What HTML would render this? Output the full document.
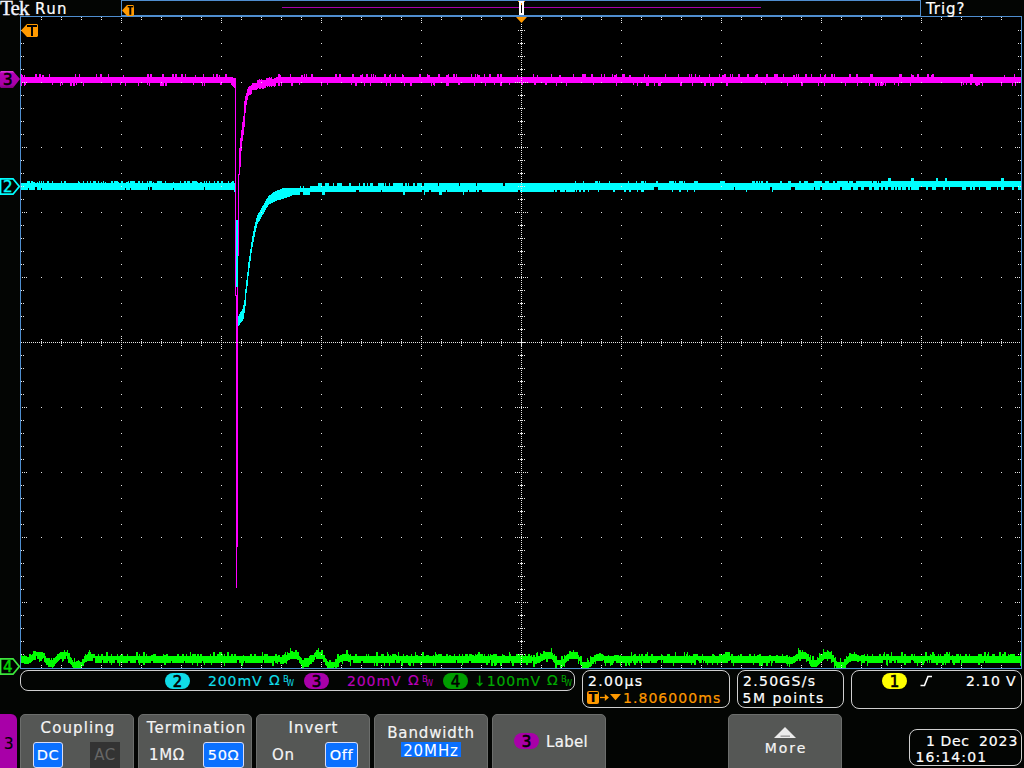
<!DOCTYPE html>
<html><head><meta charset="utf-8"><title>Tek scope</title>
<style>
html,body{margin:0;padding:0}
body{width:1024px;height:768px;overflow:hidden;position:relative;background:#030503;
 font-family:"DejaVu Sans","Liberation Sans",sans-serif;font-size:14px;color:#fff}
.t{position:absolute;white-space:nowrap;line-height:16px;height:16px;letter-spacing:.9px}
.t,.lbl,.sel,.opt{-webkit-text-stroke:.2px currentColor}
.box{position:absolute;border:1px solid #cfcfcf;border-radius:8px;box-sizing:border-box}
.pill{position:absolute;width:25px;height:16px;border-radius:8px;color:#000;text-align:center;
 line-height:18px;font-size:15px}
.pill{-webkit-text-stroke:.6px currentColor}
.btn{position:absolute;top:714px;height:60px;width:114px;box-sizing:border-box;background:#555755;
 border:1px solid #6c6e6c;border-radius:5px 5px 0 0}
.lbl{position:absolute;left:0;right:0;text-align:center;font-size:15px;line-height:18px;letter-spacing:.9px;color:#f4f4f4}
.sel{position:absolute;top:742px;height:26px;box-sizing:border-box;background:#0a70ff;border:1px solid #d8dcf8;
 border-radius:3px;color:#fff;font-size:14.5px;line-height:24.5px;text-align:center;letter-spacing:.6px}
.opt{position:absolute;font-size:15px;line-height:18px;letter-spacing:.6px;color:#f4f4f4}
.bw{position:absolute;font-size:9.5px;line-height:10px;letter-spacing:0;font-stretch:condensed;-webkit-text-stroke:0}
</style></head><body>
<svg width="1024" height="768" viewBox="0 0 1024 768" shape-rendering="crispEdges" style="position:absolute;left:0;top:0">
<defs><linearGradient id="mg" x1="0" y1="0" x2="0" y2="1"><stop offset="0" stop-color="#e23fe2"/><stop offset="0.15" stop-color="#b400b4"/><stop offset="0.8" stop-color="#a800a8"/><stop offset="1" stop-color="#7a007a"/></linearGradient></defs>
<rect x="20" y="16" width="1002" height="653" fill="#000"/>
<g transform="translate(0.5,0)" fill="none" stroke-width="1">
<path stroke="#00ff00" d="M21 654v9M22 656v7M23 656v7M24 655v9M25 656v8M26 656v8M27 657v7M28 657v7M29 654v9M30 654v9M31 655v7M32 654v7M33 651v9M34 651v9M35 651v9M36 652v4M37 652v7M38 652v7M39 652v10M40 652v9M41 652v9M42 652v7M43 653v5M44 653v9M45 656v7M46 658v7M47 658v7M48 658v9M49 658v9M50 660v7M51 658v9M52 660v8M53 658v9M54 658v8M55 657v7M56 656v7M57 654v8M58 654v7M59 653v7M60 652v7M61 652v7M62 652v10M63 652v9M64 650v9M65 652v7M66 652v4M67 650v9M68 653v10M69 653v10M70 657v7M71 658v7M72 660v7M73 662v6M74 658v10M75 662v6M76 661v7M77 661v7M78 660v8M79 661v7M80 662v6M81 662v6M82 659v7M83 659v7M84 656v7M85 654v8M86 655v7M87 654v7M88 652v9M89 650v11M90 652v9M91 654v7M92 654v7M93 654v4M94 654v4M95 656v7M96 656v7M97 656v7M98 654v9M99 656v7M100 656v7M101 654v9M102 654v6M103 656v7M104 656v7M105 656v7M106 652v11M107 652v11M108 656v5M109 656v7M110 656v7M111 654v11M112 656v7M113 656v7M114 656v7M115 656v4M116 656v4M117 654v9M118 656v7M119 656v10M120 655v8M121 654v9M122 654v9M123 656v7M124 656v7M125 656v7M126 656v7M127 654v9M128 656v5M129 656v5M130 656v7M131 656v7M132 656v7M133 656v7M134 656v7M135 656v7M136 652v8M137 652v8M138 656v7M139 654v11M140 656v7M141 656v7M142 656v7M143 652v13M144 652v13M145 656v7M146 654v9M147 656v7M148 656v7M149 656v7M150 656v7M151 655v6M152 655v6M153 654v9M154 654v9M155 654v9M156 656v7M157 656v7M158 656v7M159 656v7M160 656v7M161 656v7M162 656v7M163 654v9M164 655v10M165 655v10M166 654v9M167 654v9M168 656v7M169 656v7M170 656v7M171 656v5M172 656v7M173 656v7M174 656v7M175 656v7M176 656v7M177 654v9M178 654v9M179 656v7M180 656v7M181 656v7M182 654v9M183 654v9M184 656v5M185 656v7M186 654v9M187 656v7M188 656v7M189 656v7M190 652v11M191 656v7M192 654v11M193 654v9M194 654v9M195 654v9M196 656v7M197 654v12M198 654v9M199 656v7M200 654v9M201 654v9M202 656v5M203 656v7M204 656v9M205 656v7M206 656v7M207 656v7M208 656v7M209 656v7M210 654v9M211 656v9M212 656v7M213 652v11M214 652v11M215 656v7M216 656v7M217 654v9M218 654v9M219 652v11M220 652v11M221 652v11M222 654v9M223 656v7M224 654v12M225 656v7M226 656v7M227 652v11M228 652v11M229 656v7M230 656v7M231 654v9M232 654v9M233 656v7M234 654v9M235 654v9M236 656v7M237 656v4M238 656v4M239 656v7M240 656v7M241 656v10M242 656v10M243 655v8M244 656v5M245 656v7M246 656v7M247 656v7M248 656v7M249 656v7M250 654v9M251 654v9M252 656v7M253 656v7M254 654v9M255 654v9M256 656v7M257 656v7M258 656v7M259 656v7M260 656v7M261 656v7M262 652v11M263 656v4M264 654v9M265 654v9M266 654v9M267 654v9M268 656v7M269 656v7M270 656v7M271 656v7M272 656v10M273 656v10M274 656v5M275 654v9M276 654v9M277 656v8M278 655v7M279 655v7M280 657v7M281 657v7M282 655v9M283 655v9M284 654v9M285 652v11M286 655v9M287 652v9M288 653v7M289 653v7M290 648v11M291 651v8M292 651v8M293 652v7M294 652v7M295 650v9M296 650v9M297 652v8M298 652v8M299 656v7M300 657v7M301 658v8M302 660v8M303 660v8M304 658v9M305 658v9M306 658v9M307 658v9M308 658v9M309 656v9M310 655v9M311 655v9M312 655v7M313 655v7M314 653v7M315 652v5M316 650v9M317 650v9M318 648v11M319 652v7M320 652v7M321 650v9M322 650v9M323 655v7M324 655v7M325 658v7M326 659v7M327 661v7M328 662v6M329 660v8M330 660v8M331 662v6M332 662v6M333 662v6M334 662v5M335 659v9M336 659v9M337 654v13M338 654v13M339 656v7M340 655v7M341 655v7M342 654v10M343 654v7M344 654v7M345 654v7M346 650v11M347 650v11M348 654v8M349 655v7M350 654v12M351 656v4M352 656v4M353 656v7M354 656v7M355 654v9M356 654v9M357 656v7M358 656v7M359 656v7M360 656v7M361 656v5M362 656v5M363 656v7M364 656v7M365 656v7M366 654v9M367 656v7M368 654v9M369 656v7M370 656v7M371 656v7M372 656v7M373 656v7M374 656v10M375 656v7M376 652v14M377 652v14M378 656v7M379 656v7M380 656v7M381 654v9M382 654v9M383 654v9M384 656v10M385 656v7M386 656v7M387 652v11M388 654v9M389 656v10M390 655v8M391 656v7M392 654v9M393 654v9M394 654v9M395 654v6M396 655v8M397 656v7M398 652v11M399 656v7M400 656v5M401 656v10M402 656v10M403 654v9M404 656v7M405 656v7M406 655v8M407 655v8M408 656v9M409 656v10M410 656v10M411 654v9M412 656v7M413 656v10M414 656v7M415 652v11M416 655v8M417 655v8M418 656v7M419 656v7M420 656v9M421 656v9M422 652v11M423 652v11M424 656v7M425 656v7M426 655v8M427 655v8M428 655v8M429 656v7M430 656v7M431 656v7M432 656v7M433 655v11M434 656v7M435 652v14M436 654v9M437 655v8M438 654v9M439 654v9M440 654v9M441 654v9M442 656v7M443 656v7M444 656v7M445 656v7M446 654v9M447 654v9M448 656v7M449 655v8M450 655v8M451 656v7M452 656v7M453 656v7M454 654v9M455 656v7M456 656v4M457 656v7M458 656v7M459 654v9M460 656v7M461 656v7M462 654v11M463 656v7M464 656v7M465 654v9M466 654v9M467 654v9M468 656v7M469 654v7M470 654v7M471 654v9M472 655v8M473 655v8M474 656v7M475 654v9M476 655v8M477 654v9M478 652v11M479 652v11M480 654v9M481 654v9M482 654v9M483 656v7M484 654v9M485 656v7M486 656v9M487 656v9M488 654v9M489 656v7M490 654v6M491 655v11M492 655v11M493 654v9M494 654v12M495 654v12M496 654v11M497 656v7M498 656v7M499 656v7M500 656v10M501 656v10M502 654v9M503 655v8M504 655v8M505 656v7M506 656v7M507 656v7M508 656v7M509 652v11M510 654v7M511 656v7M512 656v10M513 656v10M514 656v7M515 656v7M516 654v9M517 654v9M518 654v9M519 654v9M520 656v9M521 655v8M522 654v9M523 656v7M524 656v7M525 654v9M526 656v9M527 656v9M528 654v9M529 654v9M530 656v7M531 655v8M532 657v4M533 655v12M534 655v12M535 657v7M536 653v11M537 652v11M538 656v7M539 656v7M540 653v9M541 654v7M542 654v7M543 651v9M544 651v9M545 652v7M546 652v10M547 652v10M548 652v7M549 652v7M550 652v7M551 648v11M552 653v7M553 655v7M554 654v9M555 656v12M556 656v12M557 660v5M558 660v5M559 660v5M560 660v8M561 656v11M562 656v11M563 659v7M564 655v12M565 656v7M566 655v7M567 654v7M568 654v7M569 651v8M570 651v8M571 652v7M572 652v7M573 650v9M574 652v7M575 652v7M576 652v7M577 652v7M578 655v9M579 657v4M580 656v9M581 656v9M582 662v6M583 662v6M584 662v6M585 662v6M586 662v6M587 658v10M588 660v8M589 662v5M590 656v11M591 657v9M592 657v7M593 657v7M594 655v7M595 655v9M596 654v7M597 654v7M598 654v7M599 653v8M600 653v8M601 654v7M602 654v7M603 655v5M604 656v7M605 656v10M606 656v7M607 656v7M608 655v8M609 656v7M610 656v10M611 656v9M612 656v9M613 656v7M614 655v6M615 655v6M616 655v8M617 655v8M618 655v8M619 656v7M620 655v11M621 656v7M622 656v7M623 656v7M624 656v7M625 656v10M626 656v10M627 656v7M628 656v9M629 656v10M630 656v7M631 652v11M632 656v5M633 655v8M634 654v11M635 654v11M636 656v7M637 656v7M638 656v5M639 654v9M640 656v7M641 654v12M642 654v7M643 656v7M644 656v7M645 654v9M646 654v9M647 652v11M648 656v7M649 656v7M650 656v5M651 654v9M652 654v9M653 656v7M654 656v7M655 656v7M656 656v7M657 656v5M658 656v4M659 656v4M660 656v4M661 654v9M662 655v5M663 656v7M664 656v7M665 656v7M666 656v7M667 654v9M668 654v9M669 654v9M670 656v7M671 656v7M672 656v7M673 656v10M674 656v7M675 652v11M676 656v7M677 656v7M678 656v7M679 656v7M680 656v7M681 656v7M682 656v7M683 656v7M684 652v11M685 656v7M686 654v9M687 652v11M688 656v7M689 655v8M690 656v7M691 656v9M692 656v7M693 654v9M694 654v11M695 654v11M696 654v6M697 654v6M698 656v5M699 656v7M700 656v7M701 656v7M702 654v6M703 656v7M704 656v5M705 656v7M706 656v7M707 656v9M708 656v7M709 656v7M710 656v7M711 656v7M712 654v11M713 654v9M714 655v8M715 656v7M716 656v7M717 656v9M718 656v7M719 654v9M720 654v9M721 654v9M722 655v8M723 654v9M724 654v9M725 652v11M726 652v11M727 652v11M728 652v9M729 652v9M730 656v4M731 654v9M732 654v9M733 656v10M734 656v7M735 656v7M736 656v7M737 656v7M738 655v8M739 656v7M740 654v9M741 654v9M742 656v7M743 656v7M744 656v7M745 656v7M746 656v7M747 656v7M748 656v7M749 654v9M750 654v9M751 656v7M752 656v7M753 656v9M754 654v9M755 656v7M756 656v7M757 655v8M758 655v8M759 654v12M760 654v12M761 656v10M762 656v10M763 656v7M764 656v7M765 656v7M766 656v10M767 656v10M768 656v7M769 655v8M770 655v6M771 656v10M772 656v7M773 656v5M774 656v5M775 656v7M776 655v8M777 655v8M778 656v7M779 656v7M780 656v7M781 656v7M782 654v9M783 656v7M784 656v7M785 656v7M786 655v9M787 655v11M788 657v7M789 656v11M790 657v7M791 657v7M792 657v7M793 656v7M794 656v7M795 655v7M796 654v7M797 654v7M798 648v11M799 650v11M800 650v11M801 652v7M802 650v9M803 652v7M804 652v7M805 652v7M806 653v9M807 654v7M808 654v7M809 657v7M810 655v11M811 660v7M812 656v11M813 656v11M814 660v7M815 660v7M816 660v7M817 657v9M818 658v7M819 653v11M820 654v9M821 654v9M822 654v7M823 649v11M824 652v7M825 652v7M826 652v7M827 650v11M828 651v8M829 652v7M830 652v7M831 651v12M832 655v7M833 655v7M834 658v10M835 657v9M836 661v7M837 662v6M838 662v6M839 662v6M840 658v10M841 662v6M842 662v6M843 662v6M844 659v9M845 659v9M846 656v9M847 657v7M848 656v7M849 653v9M850 653v9M851 654v7M852 654v7M853 654v7M854 652v9M855 654v7M856 654v7M857 655v7M858 655v7M859 656v5M860 656v5M861 655v10M862 655v8M863 655v8M864 654v9M865 656v5M866 656v5M867 654v12M868 656v7M869 656v7M870 656v7M871 656v7M872 654v9M873 656v7M874 656v7M875 656v7M876 656v7M877 656v7M878 656v7M879 654v9M880 654v9M881 656v7M882 656v7M883 654v6M884 652v8M885 656v4M886 654v11M887 654v12M888 654v6M889 656v7M890 656v7M891 652v11M892 656v5M893 656v5M894 656v7M895 656v7M896 656v4M897 656v7M898 656v7M899 656v7M900 656v7M901 652v11M902 652v11M903 656v7M904 654v11M905 654v11M906 656v7M907 656v7M908 656v7M909 656v7M910 656v7M911 654v6M912 654v6M913 656v5M914 654v9M915 656v7M916 656v7M917 656v10M918 656v7M919 656v7M920 656v7M921 656v7M922 656v9M923 656v9M924 656v7M925 652v9M926 652v9M927 656v7M928 656v4M929 656v7M930 654v6M931 655v8M932 652v11M933 652v11M934 654v9M935 656v7M936 656v9M937 656v9M938 654v9M939 656v7M940 654v9M941 656v7M942 656v9M943 656v9M944 654v9M945 654v11M946 652v11M947 652v11M948 654v9M949 652v11M950 656v4M951 656v4M952 655v8M953 656v9M954 656v9M955 656v7M956 654v9M957 654v9M958 654v9M959 656v7M960 654v6M961 656v10M962 656v7M963 656v7M964 656v7M965 654v9M966 654v9M967 656v7M968 656v7M969 654v9M970 656v7M971 656v7M972 656v7M973 656v7M974 656v7M975 656v7M976 656v7M977 656v7M978 654v11M979 654v11M980 654v9M981 654v9M982 656v7M983 656v7M984 652v9M985 652v11M986 656v7M987 654v9M988 652v11M989 656v7M990 656v7M991 656v7M992 654v9M993 654v9M994 654v9M995 656v7M996 656v7M997 656v7M998 656v7M999 652v11M1000 652v11M1001 656v7M1002 654v9M1003 654v9M1004 652v11M1005 652v11M1006 656v7M1007 656v7M1008 654v9M1009 655v8M1010 654v9M1011 654v9M1012 654v9M1013 654v9M1014 654v9M1015 656v7M1016 656v7M1017 656v7M1018 656v7M1019 656v7M1020 652v14"/>
<path stroke="#00ffff" d="M21 183v7M22 183v7M23 183v7M24 183v7M25 183v7M26 183v7M27 181v9M28 181v7M29 181v9M30 183v7M31 181v9M32 181v9M33 182v8M34 182v8M35 183v4M36 183v4M37 182v8M38 183v7M39 181v9M40 183v7M41 181v7M42 183v7M43 181v9M44 183v7M45 183v7M46 183v7M47 181v9M48 181v9M49 183v7M50 183v7M51 183v7M52 181v9M53 183v7M54 183v7M55 183v7M56 183v7M57 183v7M58 183v7M59 183v7M60 183v7M61 181v9M62 183v7M63 183v7M64 181v9M65 181v9M66 183v7M67 183v7M68 183v7M69 183v7M70 183v7M71 183v7M72 183v7M73 183v7M74 183v7M75 183v7M76 183v7M77 183v7M78 181v9M79 182v8M80 183v7M81 183v7M82 183v7M83 181v9M84 183v7M85 183v7M86 183v7M87 181v9M88 183v7M89 183v7M90 181v9M91 183v7M92 183v7M93 181v9M94 181v9M95 181v9M96 183v7M97 183v7M98 181v9M99 183v7M100 183v7M101 182v8M102 183v7M103 181v9M104 183v7M105 182v8M106 183v7M107 183v7M108 183v7M109 183v7M110 183v7M111 181v9M112 181v9M113 183v7M114 181v9M115 181v9M116 181v9M117 181v9M118 182v8M119 183v7M120 183v7M121 181v9M122 181v9M123 183v7M124 183v7M125 183v5M126 182v8M127 182v8M128 181v9M129 183v7M130 181v7M131 181v9M132 181v9M133 181v9M134 181v9M135 183v7M136 183v7M137 183v7M138 181v9M139 181v9M140 183v7M141 183v7M142 181v9M143 183v7M144 183v7M145 183v7M146 183v7M147 181v9M148 183v4M149 181v9M150 181v6M151 181v6M152 183v7M153 182v8M154 183v7M155 183v7M156 183v7M157 181v9M158 181v9M159 181v9M160 181v9M161 181v9M162 183v7M163 183v7M164 183v7M165 181v9M166 183v7M167 183v7M168 183v7M169 183v7M170 183v7M171 183v7M172 183v7M173 182v6M174 183v7M175 183v7M176 183v7M177 183v7M178 183v7M179 183v7M180 181v9M181 183v7M182 183v7M183 183v7M184 181v9M185 181v9M186 183v7M187 181v9M188 181v9M189 181v9M190 183v7M191 183v7M192 181v9M193 181v9M194 181v9M195 181v9M196 181v9M197 182v8M198 183v7M199 183v7M200 182v8M201 182v8M202 183v7M203 183v7M204 181v6M205 183v7M206 181v9M207 183v7M208 183v7M209 181v9M210 183v7M211 183v7M212 183v7M213 183v7M214 181v9M215 183v7M216 183v7M217 181v9M218 181v9M219 183v7M220 183v7M221 181v9M222 181v9M223 183v7M224 183v7M225 183v7M226 183v7M227 183v7M228 181v9M229 183v7M230 183v7M231 182v8M232 181v9M233 181v9M234 183v9M235 183v38M236 220v67M237 220v67M238 316v10M239 314v11M240 312v11M241 311v11M242 309v12M243 305v14M244 300v13M245 289v17M246 280v13M247 272v14M248 262v14M249 256v12M250 249v12M251 242v11M252 236v11M253 231v11M254 226v11M255 222v10M256 218v10M257 215v9M258 213v9M259 212v9M260 210v9M261 208v9M262 206v9M263 205v9M264 203v9M265 201v9M266 199v9M267 198v9M268 196v9M269 195v9M270 195v9M271 194v9M272 193v10M273 192v10M274 192v10M275 191v10M276 191v10M277 190v10M278 190v10M279 190v10M280 189v11M281 189v10M282 188v11M283 188v11M284 188v10M285 188v10M286 188v10M287 188v9M288 188v9M289 188v9M290 188v8M291 188v8M292 188v7M293 188v7M294 188v7M295 188v7M296 188v7M297 188v7M298 188v7M299 188v7M300 186v6M301 188v4M302 188v4M303 186v9M304 188v7M305 188v7M306 188v7M307 188v7M308 188v7M309 188v7M310 186v6M311 186v6M312 186v6M313 186v6M314 186v6M315 186v6M316 186v6M317 186v6M318 183v9M319 183v9M320 183v9M321 183v9M322 186v9M323 186v9M324 186v9M325 183v9M326 183v9M327 183v9M328 183v9M329 186v6M330 186v6M331 186v6M332 186v6M333 183v9M334 186v6M335 186v6M336 186v6M337 183v9M338 183v9M339 183v9M340 183v9M341 183v9M342 186v6M343 186v6M344 186v6M345 186v6M346 186v6M347 186v6M348 186v6M349 183v9M350 183v9M351 186v6M352 186v6M353 186v6M354 186v6M355 186v6M356 186v4M357 186v4M358 186v4M359 183v9M360 186v6M361 186v6M362 186v6M363 183v9M364 183v9M365 186v6M366 186v6M367 183v9M368 186v6M369 186v6M370 183v9M371 183v9M372 183v9M373 186v6M374 186v6M375 186v6M376 186v6M377 186v6M378 183v9M379 183v9M380 183v9M381 183v7M382 183v9M383 183v9M384 186v6M385 183v9M386 186v6M387 186v6M388 186v6M389 183v9M390 186v6M391 186v6M392 186v6M393 183v9M394 183v9M395 183v9M396 183v9M397 183v9M398 183v9M399 183v9M400 183v9M401 183v9M402 183v9M403 186v9M404 186v9M405 183v9M406 183v9M407 186v6M408 183v9M409 186v6M410 186v6M411 186v6M412 186v6M413 183v9M414 183v9M415 186v6M416 186v6M417 183v9M418 183v9M419 183v9M420 183v9M421 183v9M422 186v4M423 186v4M424 183v12M425 183v9M426 183v9M427 183v9M428 183v9M429 183v7M430 183v7M431 183v9M432 183v9M433 183v9M434 183v9M435 183v9M436 183v9M437 183v9M438 186v6M439 183v12M440 183v12M441 183v12M442 183v9M443 183v9M444 183v9M445 183v9M446 183v7M447 183v9M448 183v9M449 183v9M450 183v9M451 183v9M452 183v9M453 183v9M454 183v9M455 183v9M456 183v9M457 183v9M458 183v9M459 186v6M460 183v9M461 183v9M462 183v9M463 183v12M464 183v9M465 183v9M466 183v9M467 183v9M468 183v7M469 183v9M470 183v9M471 183v9M472 183v9M473 183v9M474 183v9M475 183v9M476 186v4M477 183v9M478 183v9M479 183v7M480 183v7M481 183v7M482 183v9M483 183v9M484 183v9M485 183v9M486 183v9M487 183v9M488 183v9M489 183v9M490 183v9M491 183v9M492 183v9M493 183v9M494 183v9M495 183v9M496 183v9M497 183v9M498 183v9M499 183v9M500 183v9M501 183v9M502 183v9M503 186v6M504 186v6M505 183v9M506 183v9M507 183v9M508 183v9M509 183v9M510 183v9M511 183v9M512 183v9M513 183v9M514 183v9M515 183v9M516 183v9M517 183v9M518 183v7M519 183v7M520 183v9M521 183v9M522 183v9M523 183v9M524 183v9M525 183v9M526 183v9M527 183v9M528 183v9M529 183v9M530 183v9M531 183v9M532 183v9M533 183v9M534 183v9M535 183v9M536 183v9M537 183v9M538 183v9M539 183v9M540 183v9M541 183v9M542 183v9M543 183v9M544 183v9M545 183v9M546 183v9M547 183v9M548 183v9M549 183v9M550 183v9M551 183v9M552 183v9M553 183v9M554 183v7M555 183v9M556 183v9M557 183v7M558 183v7M559 183v7M560 183v9M561 183v9M562 183v9M563 183v9M564 183v9M565 183v7M566 183v9M567 183v9M568 183v9M569 183v9M570 183v9M571 183v9M572 183v9M573 183v9M574 183v9M575 181v9M576 183v9M577 183v7M578 183v7M579 183v9M580 183v9M581 183v7M582 183v7M583 181v11M584 183v9M585 183v7M586 183v7M587 183v7M588 183v9M589 183v7M590 183v7M591 183v7M592 183v7M593 183v7M594 183v7M595 181v9M596 181v9M597 181v9M598 183v9M599 181v9M600 183v7M601 183v7M602 183v7M603 183v7M604 183v7M605 183v7M606 183v7M607 183v7M608 183v7M609 181v9M610 183v7M611 183v7M612 183v7M613 183v9M614 183v9M615 183v7M616 183v7M617 183v7M618 183v7M619 183v7M620 183v7M621 183v7M622 183v7M623 183v7M624 183v9M625 183v9M626 183v7M627 183v7M628 181v9M629 183v9M630 183v9M631 183v7M632 183v7M633 183v7M634 183v7M635 183v7M636 181v9M637 183v9M638 183v7M639 183v7M640 183v7M641 181v11M642 181v11M643 181v11M644 183v7M645 181v9M646 183v7M647 183v7M648 183v7M649 183v7M650 183v7M651 183v7M652 183v7M653 183v7M654 183v4M655 183v4M656 181v6M657 181v6M658 183v7M659 183v7M660 183v7M661 183v7M662 183v7M663 183v7M664 183v7M665 183v7M666 183v7M667 183v7M668 183v7M669 181v9M670 181v9M671 181v9M672 181v11M673 181v9M674 183v7M675 181v9M676 183v7M677 183v7M678 183v7M679 181v11M680 181v11M681 181v9M682 181v9M683 183v7M684 181v9M685 183v7M686 183v7M687 183v9M688 183v7M689 183v7M690 183v7M691 183v7M692 183v7M693 183v7M694 181v11M695 181v9M696 181v9M697 181v9M698 183v7M699 183v7M700 183v7M701 183v7M702 183v7M703 183v7M704 183v7M705 183v7M706 183v7M707 183v7M708 183v7M709 183v7M710 183v7M711 183v7M712 183v7M713 183v7M714 183v7M715 183v7M716 183v7M717 183v7M718 183v7M719 183v7M720 181v9M721 181v9M722 181v9M723 181v9M724 181v9M725 183v7M726 183v7M727 183v7M728 183v7M729 183v7M730 183v7M731 183v7M732 183v7M733 183v7M734 183v4M735 183v7M736 183v7M737 183v7M738 183v7M739 183v7M740 183v7M741 183v7M742 183v7M743 183v7M744 183v7M745 183v7M746 183v9M747 183v7M748 183v7M749 183v7M750 183v7M751 183v7M752 181v9M753 181v9M754 181v9M755 183v7M756 181v9M757 181v9M758 183v7M759 181v9M760 183v7M761 181v9M762 181v9M763 183v7M764 183v7M765 183v7M766 181v9M767 181v9M768 183v7M769 183v7M770 183v4M771 183v4M772 183v9M773 183v7M774 183v7M775 183v7M776 183v7M777 183v7M778 183v7M779 183v7M780 181v9M781 181v9M782 183v7M783 183v7M784 183v7M785 183v7M786 183v7M787 183v7M788 181v9M789 181v9M790 181v9M791 183v4M792 183v4M793 183v4M794 183v4M795 183v7M796 183v7M797 183v7M798 183v7M799 181v9M800 181v9M801 183v7M802 183v7M803 183v7M804 181v9M805 181v9M806 181v9M807 181v9M808 183v7M809 183v7M810 183v7M811 183v7M812 183v7M813 183v7M814 181v6M815 181v9M816 181v9M817 181v9M818 181v9M819 181v9M820 181v6M821 181v6M822 183v7M823 183v7M824 183v7M825 181v9M826 181v9M827 181v9M828 181v9M829 183v7M830 183v7M831 183v7M832 183v7M833 181v9M834 181v9M835 183v7M836 183v7M837 181v9M838 181v9M839 181v9M840 181v6M841 181v6M842 181v9M843 181v9M844 181v9M845 181v9M846 181v9M847 181v9M848 183v7M849 181v9M850 181v9M851 181v6M852 181v6M853 183v7M854 183v7M855 183v7M856 181v9M857 181v9M858 181v6M859 181v6M860 181v6M861 181v9M862 181v9M863 181v9M864 181v6M865 181v6M866 181v6M867 181v6M868 181v6M869 181v9M870 181v9M871 181v9M872 183v4M873 181v6M874 181v9M875 181v9M876 181v9M877 183v7M878 181v9M879 183v4M880 183v4M881 181v9M882 181v9M883 181v6M884 181v6M885 181v9M886 181v9M887 181v9M888 178v9M889 178v9M890 178v9M891 181v9M892 181v9M893 181v9M894 181v6M895 181v9M896 181v9M897 181v6M898 181v9M899 181v9M900 181v9M901 181v6M902 181v9M903 181v9M904 181v9M905 181v9M906 181v6M907 181v6M908 181v9M909 181v9M910 181v6M911 178v12M912 178v12M913 178v12M914 181v9M915 181v9M916 181v9M917 181v9M918 181v9M919 181v6M920 181v6M921 181v6M922 181v6M923 181v6M924 181v6M925 181v6M926 181v9M927 181v9M928 181v6M929 181v6M930 181v6M931 181v6M932 181v9M933 181v9M934 181v9M935 181v9M936 178v9M937 178v9M938 181v6M939 181v6M940 181v6M941 181v6M942 181v6M943 181v9M944 181v9M945 178v9M946 178v9M947 181v6M948 181v6M949 181v9M950 181v6M951 181v6M952 181v6M953 181v6M954 181v6M955 181v6M956 181v6M957 181v6M958 181v6M959 181v6M960 181v6M961 181v6M962 181v9M963 181v9M964 181v9M965 181v9M966 181v6M967 181v6M968 181v6M969 181v6M970 181v9M971 181v9M972 181v6M973 181v9M974 181v9M975 181v6M976 181v6M977 181v6M978 181v6M979 181v9M980 181v6M981 181v6M982 181v6M983 181v6M984 181v6M985 181v6M986 181v9M987 181v9M988 181v9M989 181v9M990 181v9M991 181v6M992 181v6M993 181v6M994 181v6M995 181v6M996 181v6M997 181v9M998 181v6M999 181v6M1000 181v6M1001 178v12M1002 178v12M1003 178v12M1004 181v6M1005 181v6M1006 181v6M1007 181v6M1008 181v6M1009 181v6M1010 181v6M1011 181v6M1012 181v9M1013 181v9M1014 181v6M1015 181v6M1016 181v6M1017 181v6M1018 181v9M1019 181v9M1020 181v9"/>
<path stroke="#ff00ff" d="M21 74v12M22 75v8M23 77v6M24 75v11M25 77v8M26 77v6M27 77v6M28 77v6M29 77v6M30 77v6M31 77v6M32 77v6M33 77v6M34 77v6M35 74v9M36 74v9M37 77v6M38 77v6M39 74v9M40 74v9M41 77v6M42 75v8M43 75v8M44 77v6M45 77v6M46 77v6M47 77v6M48 77v6M49 74v9M50 77v6M51 77v6M52 77v8M53 77v6M54 77v6M55 77v6M56 77v6M57 77v6M58 77v6M59 77v6M60 77v9M61 77v6M62 77v8M63 77v6M64 77v6M65 77v6M66 77v6M67 77v6M68 77v6M69 77v6M70 77v9M71 77v9M72 77v6M73 77v9M74 77v9M75 74v9M76 77v8M77 77v6M78 77v6M79 74v9M80 77v6M81 77v6M82 77v6M83 77v9M84 77v6M85 77v6M86 77v6M87 77v6M88 77v6M89 77v6M90 77v6M91 77v6M92 77v6M93 77v6M94 77v6M95 77v6M96 74v9M97 77v6M98 77v6M99 77v6M100 74v9M101 74v9M102 77v6M103 77v6M104 77v6M105 77v6M106 77v6M107 77v6M108 74v9M109 77v6M110 77v6M111 77v9M112 77v6M113 77v6M114 77v6M115 77v6M116 77v6M117 77v6M118 77v6M119 77v6M120 77v8M121 77v6M122 77v6M123 75v8M124 77v6M125 77v9M126 77v6M127 77v6M128 77v6M129 77v6M130 77v6M131 77v6M132 77v6M133 77v6M134 77v6M135 77v6M136 77v6M137 77v6M138 77v9M139 77v6M140 77v6M141 77v6M142 77v6M143 77v6M144 77v6M145 77v6M146 77v6M147 74v11M148 74v9M149 77v9M150 74v9M151 74v9M152 77v6M153 77v6M154 77v6M155 77v6M156 77v6M157 77v6M158 77v6M159 77v6M160 77v9M161 77v9M162 74v12M163 74v12M164 77v6M165 77v9M166 77v9M167 77v6M168 77v6M169 77v6M170 77v6M171 77v6M172 74v9M173 74v9M174 77v6M175 74v9M176 74v9M177 77v6M178 77v6M179 77v6M180 77v6M181 74v9M182 74v9M183 77v6M184 77v6M185 74v9M186 77v6M187 77v6M188 77v6M189 77v6M190 77v6M191 77v6M192 77v6M193 77v8M194 77v6M195 75v8M196 77v6M197 77v6M198 77v6M199 77v6M200 77v6M201 77v6M202 77v9M203 74v9M204 77v9M205 77v6M206 77v6M207 77v6M208 77v6M209 77v6M210 77v6M211 77v6M212 77v6M213 74v9M214 77v6M215 77v6M216 74v9M217 74v9M218 77v6M219 75v8M220 77v8M221 77v8M222 77v6M223 77v6M224 77v6M225 74v9M226 74v9M227 77v6M228 77v6M229 77v6M230 77v6M231 77v8M232 77v9M233 78v9M234 78v10M235 78v218M236 295v293M237 287v260M238 174v82M239 148v27M240 138v29M241 130v21M242 122v19M243 116v19M244 101v26M245 96v17M246 93v12M247 89v11M248 87v9M249 86v9M250 86v9M251 85v9M252 83v7M253 83v7M254 83v7M255 83v7M256 83v7M257 80v9M258 80v8M259 79v10M260 80v9M261 79v9M262 80v9M263 80v9M264 80v8M265 80v8M266 78v8M267 78v9M268 78v8M269 77v10M270 78v8M271 77v10M272 79v7M273 79v7M274 78v9M275 78v8M276 77v6M277 77v6M278 74v12M279 74v12M280 75v8M281 77v9M282 77v6M283 77v6M284 77v6M285 77v6M286 77v6M287 77v6M288 77v6M289 77v6M290 74v9M291 77v9M292 77v9M293 77v6M294 77v6M295 77v6M296 77v6M297 77v6M298 77v6M299 77v8M300 77v6M301 75v8M302 75v8M303 77v6M304 74v9M305 77v6M306 74v9M307 77v6M308 77v6M309 77v6M310 77v6M311 74v9M312 74v9M313 77v6M314 77v6M315 77v6M316 77v6M317 77v6M318 77v6M319 77v6M320 77v6M321 77v9M322 77v6M323 77v6M324 77v6M325 77v6M326 77v6M327 77v8M328 77v6M329 77v6M330 77v6M331 77v6M332 77v6M333 77v6M334 77v6M335 74v9M336 74v9M337 77v6M338 77v6M339 74v9M340 74v9M341 77v6M342 77v6M343 77v6M344 77v6M345 77v6M346 77v6M347 77v6M348 77v6M349 77v6M350 77v6M351 77v8M352 74v9M353 74v9M354 77v6M355 77v9M356 77v9M357 77v6M358 77v6M359 77v6M360 75v8M361 75v8M362 74v9M363 77v6M364 77v9M365 77v6M366 74v9M367 74v9M368 77v6M369 77v6M370 77v9M371 74v9M372 77v6M373 74v9M374 77v6M375 75v8M376 77v6M377 77v6M378 77v6M379 77v6M380 77v6M381 77v6M382 77v6M383 77v6M384 74v9M385 74v9M386 77v9M387 77v6M388 77v6M389 75v8M390 74v12M391 77v6M392 77v6M393 77v6M394 77v6M395 74v9M396 77v6M397 77v6M398 77v6M399 77v6M400 77v6M401 77v6M402 74v9M403 75v8M404 77v9M405 77v6M406 77v6M407 77v6M408 77v6M409 77v6M410 77v9M411 77v9M412 77v6M413 77v6M414 77v6M415 77v6M416 77v6M417 77v6M418 77v6M419 74v9M420 74v9M421 77v6M422 77v6M423 77v6M424 77v6M425 77v6M426 77v6M427 74v9M428 75v8M429 75v8M430 77v6M431 77v9M432 77v6M433 77v8M434 77v9M435 77v6M436 77v6M437 77v6M438 74v9M439 74v9M440 77v6M441 77v6M442 77v6M443 77v6M444 77v6M445 77v6M446 75v11M447 75v11M448 74v12M449 77v6M450 77v6M451 77v6M452 77v6M453 74v9M454 74v9M455 77v6M456 74v9M457 77v6M458 77v8M459 77v8M460 77v6M461 77v6M462 77v6M463 77v6M464 77v6M465 77v6M466 77v6M467 77v6M468 77v6M469 77v6M470 77v6M471 74v9M472 77v6M473 77v6M474 77v9M475 74v9M476 77v6M477 74v9M478 75v8M479 75v8M480 77v6M481 77v6M482 77v6M483 77v6M484 74v9M485 77v9M486 77v6M487 77v6M488 77v6M489 74v9M490 74v9M491 77v6M492 77v6M493 77v6M494 77v8M495 77v6M496 77v6M497 74v9M498 74v9M499 77v6M500 74v12M501 74v12M502 77v6M503 77v6M504 77v6M505 77v6M506 77v6M507 77v6M508 77v6M509 77v8M510 77v6M511 77v6M512 77v6M513 77v6M514 77v6M515 77v6M516 77v6M517 75v8M518 77v6M519 77v6M520 77v6M521 77v8M522 77v8M523 77v6M524 77v6M525 77v6M526 77v6M527 77v6M528 77v6M529 77v6M530 77v6M531 77v6M532 77v6M533 74v9M534 77v8M535 77v8M536 77v6M537 75v8M538 77v6M539 77v6M540 77v6M541 77v6M542 77v6M543 77v6M544 77v6M545 77v8M546 77v8M547 77v6M548 77v6M549 77v6M550 77v6M551 74v9M552 77v6M553 77v6M554 77v6M555 77v6M556 77v9M557 77v6M558 77v6M559 75v8M560 75v8M561 77v6M562 77v6M563 77v6M564 77v6M565 77v6M566 77v9M567 77v6M568 77v6M569 77v6M570 77v6M571 77v6M572 77v6M573 74v9M574 77v6M575 77v6M576 77v6M577 77v6M578 77v6M579 77v6M580 77v6M581 77v6M582 74v9M583 74v9M584 74v9M585 74v9M586 77v6M587 77v6M588 77v6M589 77v6M590 77v6M591 74v9M592 74v9M593 77v8M594 77v6M595 77v6M596 77v6M597 77v6M598 77v6M599 77v6M600 77v6M601 74v9M602 77v6M603 77v6M604 74v9M605 77v6M606 77v6M607 77v6M608 77v6M609 77v6M610 77v6M611 77v6M612 74v9M613 77v6M614 75v8M615 75v8M616 74v12M617 77v6M618 77v6M619 77v6M620 77v6M621 77v6M622 74v9M623 74v9M624 74v9M625 77v6M626 77v6M627 77v6M628 77v6M629 75v8M630 75v8M631 77v6M632 77v6M633 77v8M634 77v6M635 77v6M636 77v6M637 77v9M638 77v6M639 77v6M640 77v6M641 77v6M642 77v6M643 77v6M644 74v9M645 77v6M646 77v9M647 77v9M648 75v11M649 77v6M650 77v6M651 77v6M652 77v6M653 77v6M654 77v9M655 77v6M656 77v6M657 77v6M658 77v9M659 77v9M660 77v9M661 77v6M662 77v6M663 77v6M664 77v6M665 74v9M666 77v6M667 77v6M668 77v6M669 77v6M670 77v6M671 77v6M672 77v6M673 77v6M674 77v6M675 77v6M676 77v6M677 77v6M678 74v9M679 77v6M680 77v9M681 77v9M682 77v6M683 77v6M684 77v6M685 77v6M686 77v6M687 77v6M688 77v6M689 74v9M690 77v6M691 74v9M692 77v9M693 77v6M694 77v6M695 74v9M696 77v6M697 77v6M698 77v6M699 75v8M700 77v6M701 77v6M702 77v6M703 77v6M704 77v9M705 77v9M706 77v6M707 77v6M708 77v6M709 74v9M710 77v9M711 77v6M712 77v9M713 77v9M714 77v6M715 77v6M716 77v6M717 77v6M718 77v6M719 74v9M720 77v6M721 77v6M722 75v8M723 75v8M724 74v9M725 74v9M726 77v9M727 77v9M728 77v6M729 77v6M730 74v9M731 77v6M732 74v9M733 77v6M734 77v6M735 77v6M736 77v6M737 77v6M738 74v9M739 74v9M740 77v6M741 77v6M742 77v6M743 77v6M744 77v6M745 77v6M746 77v6M747 74v9M748 74v9M749 77v6M750 77v6M751 77v6M752 77v6M753 77v6M754 77v6M755 75v8M756 74v9M757 74v9M758 77v6M759 77v6M760 77v6M761 77v6M762 77v6M763 77v6M764 77v6M765 77v8M766 74v9M767 74v9M768 77v6M769 77v6M770 77v6M771 77v6M772 77v6M773 77v6M774 74v9M775 74v9M776 74v9M777 74v9M778 77v6M779 77v6M780 77v6M781 77v6M782 77v6M783 74v9M784 77v6M785 77v6M786 77v6M787 77v9M788 77v6M789 77v6M790 77v6M791 77v6M792 77v6M793 75v8M794 75v8M795 77v6M796 74v9M797 77v6M798 74v9M799 77v6M800 77v6M801 77v9M802 77v9M803 77v6M804 77v6M805 74v9M806 74v9M807 77v6M808 77v6M809 77v6M810 77v6M811 74v9M812 77v6M813 77v6M814 77v6M815 77v6M816 77v6M817 77v6M818 77v9M819 77v6M820 74v9M821 77v6M822 77v6M823 77v6M824 75v11M825 74v9M826 77v6M827 77v6M828 77v6M829 77v6M830 77v6M831 74v9M832 74v9M833 77v6M834 74v9M835 77v6M836 77v6M837 77v6M838 77v6M839 77v6M840 77v6M841 77v6M842 77v6M843 77v6M844 77v6M845 77v9M846 77v6M847 77v6M848 77v6M849 74v9M850 74v9M851 77v6M852 77v6M853 77v6M854 77v6M855 77v6M856 74v9M857 74v12M858 77v6M859 77v6M860 77v6M861 77v6M862 77v6M863 77v6M864 77v6M865 77v6M866 77v6M867 77v6M868 77v6M869 77v9M870 74v9M871 74v9M872 74v9M873 77v6M874 77v6M875 77v9M876 77v9M877 77v6M878 77v9M879 77v6M880 77v9M881 77v9M882 77v9M883 77v8M884 77v6M885 77v9M886 77v6M887 77v6M888 77v6M889 77v6M890 77v6M891 77v6M892 77v6M893 77v6M894 77v8M895 77v6M896 77v6M897 77v6M898 77v9M899 74v9M900 74v9M901 74v9M902 77v6M903 77v6M904 77v6M905 77v6M906 77v6M907 77v6M908 77v6M909 77v6M910 77v9M911 74v9M912 75v8M913 75v8M914 77v6M915 77v6M916 77v6M917 74v9M918 74v9M919 77v6M920 77v6M921 77v6M922 77v6M923 77v6M924 77v6M925 77v6M926 77v6M927 74v9M928 74v9M929 77v6M930 77v6M931 75v8M932 74v9M933 74v9M934 77v6M935 77v6M936 77v6M937 77v6M938 77v6M939 77v6M940 77v6M941 77v6M942 77v6M943 77v6M944 77v6M945 77v6M946 77v6M947 77v6M948 77v6M949 77v6M950 77v6M951 77v6M952 77v6M953 77v6M954 77v6M955 77v6M956 77v6M957 77v6M958 77v6M959 77v6M960 77v6M961 77v9M962 77v6M963 77v8M964 77v6M965 77v6M966 77v8M967 77v6M968 77v6M969 77v6M970 74v11M971 74v11M972 74v9M973 77v6M974 77v6M975 77v8M976 77v9M977 77v9M978 77v8M979 77v8M980 77v6M981 77v6M982 77v9M983 77v6M984 77v6M985 77v6M986 77v6M987 77v6M988 77v6M989 77v6M990 77v6M991 77v6M992 77v6M993 77v6M994 77v6M995 77v6M996 77v6M997 77v6M998 77v6M999 77v6M1000 77v6M1001 77v9M1002 77v6M1003 77v6M1004 75v8M1005 77v6M1006 77v6M1007 77v6M1008 77v6M1009 77v6M1010 77v6M1011 77v6M1012 77v9M1013 77v6M1014 74v9M1015 77v9M1016 77v6M1017 77v6M1018 77v6M1019 77v6M1020 77v6"/>
</g>
<g transform="translate(0,0.5)" fill="none" stroke-width="1">
<path stroke="#e6e6e6" d="M21 30h1M21 43h1M21 56h1M21 69h1M21 95h1M21 108h1M21 121h1M21 134h1M21 160h1M21 173h1M21 186h1M21 199h1M21 225h1M21 238h1M21 251h1M21 264h1M21 290h1M21 303h1M21 316h1M21 329h1M21 342h1M21 355h1M21 368h1M21 381h1M21 394h1M21 420h1M21 433h1M21 446h1M21 459h1M21 485h1M21 498h1M21 511h1M21 524h1M21 550h1M21 563h1M21 576h1M21 589h1M21 615h1M21 628h1M21 641h1M21 654h1M22 82h1M22 147h1M22 212h1M22 277h1M22 407h1M22 472h1M22 537h1M22 602h1M23 30h1M23 43h1M23 56h1M23 69h1M23 95h1M23 108h1M23 121h1M23 134h1M23 160h1M23 173h1M23 186h1M23 199h1M23 225h1M23 238h1M23 251h1M23 264h1M23 290h1M23 303h1M23 316h1M23 329h1M23 342h1M23 355h1M23 368h1M23 381h1M23 394h1M23 420h1M23 433h1M23 446h1M23 459h1M23 485h1M23 498h1M23 511h1M23 524h1M23 550h1M23 563h1M23 576h1M23 589h1M23 615h1M23 628h1M23 641h1M23 654h1M24 82h1M24 147h1M24 212h1M24 277h1M24 407h1M24 472h1M24 537h1M24 602h1M25 342h1M26 82h1M26 147h1M26 212h1M26 277h1M26 407h1M26 472h1M26 537h1M26 602h1M27 342h1M29 342h1M31 342h1M33 342h1M35 342h1M37 342h1M39 342h1M41 17h1M41 19h1M41 82h1M41 147h1M41 212h1M41 277h1M41 339h1M41 341h1M41 342h1M41 343h1M41 345h1M41 407h1M41 472h1M41 537h1M41 602h1M41 665h1M41 667h1M43 342h1M45 342h1M47 342h1M49 342h1M51 342h1M53 342h1M55 342h1M57 342h1M59 342h1M61 17h1M61 19h1M61 82h1M61 147h1M61 212h1M61 277h1M61 339h1M61 341h1M61 342h1M61 343h1M61 345h1M61 407h1M61 472h1M61 537h1M61 602h1M61 665h1M61 667h1M63 342h1M65 342h1M67 342h1M69 342h1M71 342h1M73 342h1M75 342h1M77 342h1M79 342h1M81 17h1M81 19h1M81 82h1M81 147h1M81 212h1M81 277h1M81 339h1M81 341h1M81 342h1M81 343h1M81 345h1M81 407h1M81 472h1M81 537h1M81 602h1M81 665h1M81 667h1M83 342h1M85 342h1M87 342h1M89 342h1M91 342h1M93 342h1M95 342h1M97 342h1M99 342h1M101 17h1M101 19h1M101 82h1M101 147h1M101 212h1M101 277h1M101 339h1M101 341h1M101 342h1M101 343h1M101 345h1M101 407h1M101 472h1M101 537h1M101 602h1M101 665h1M101 667h1M103 342h1M105 342h1M107 342h1M109 342h1M111 342h1M113 342h1M115 342h1M117 342h1M119 342h1M121 18h1M121 20h1M121 22h1M121 30h1M121 43h1M121 56h1M121 69h1M121 82h1M121 95h1M121 108h1M121 121h1M121 134h1M121 147h1M121 160h1M121 173h1M121 186h1M121 199h1M121 212h1M121 225h1M121 238h1M121 251h1M121 264h1M121 277h1M121 290h1M121 303h1M121 316h1M121 329h1M121 336h1M121 338h1M121 340h1M121 342h1M121 344h1M121 346h1M121 348h1M121 355h1M121 368h1M121 381h1M121 394h1M121 407h1M121 420h1M121 433h1M121 446h1M121 459h1M121 472h1M121 485h1M121 498h1M121 511h1M121 524h1M121 537h1M121 550h1M121 563h1M121 576h1M121 589h1M121 602h1M121 615h1M121 628h1M121 641h1M121 654h1M121 662h1M121 664h1M121 666h1M123 342h1M125 342h1M127 342h1M129 342h1M131 342h1M133 342h1M135 342h1M137 342h1M139 342h1M141 17h1M141 19h1M141 82h1M141 147h1M141 212h1M141 277h1M141 339h1M141 341h1M141 342h1M141 343h1M141 345h1M141 407h1M141 472h1M141 537h1M141 602h1M141 665h1M141 667h1M143 342h1M145 342h1M147 342h1M149 342h1M151 342h1M153 342h1M155 342h1M157 342h1M159 342h1M161 17h1M161 19h1M161 82h1M161 147h1M161 212h1M161 277h1M161 339h1M161 341h1M161 342h1M161 343h1M161 345h1M161 407h1M161 472h1M161 537h1M161 602h1M161 665h1M161 667h1M163 342h1M165 342h1M167 342h1M169 342h1M171 342h1M173 342h1M175 342h1M177 342h1M179 342h1M181 17h1M181 19h1M181 82h1M181 147h1M181 212h1M181 277h1M181 339h1M181 341h1M181 342h1M181 343h1M181 345h1M181 407h1M181 472h1M181 537h1M181 602h1M181 665h1M181 667h1M183 342h1M185 342h1M187 342h1M189 342h1M191 342h1M193 342h1M195 342h1M197 342h1M199 342h1M201 17h1M201 19h1M201 82h1M201 147h1M201 212h1M201 277h1M201 339h1M201 341h1M201 342h1M201 343h1M201 345h1M201 407h1M201 472h1M201 537h1M201 602h1M201 665h1M201 667h1M203 342h1M205 342h1M207 342h1M209 342h1M211 342h1M213 342h1M215 342h1M217 342h1M219 342h1M221 18h1M221 20h1M221 22h1M221 30h1M221 43h1M221 56h1M221 69h1M221 82h1M221 95h1M221 108h1M221 121h1M221 134h1M221 147h1M221 160h1M221 173h1M221 186h1M221 199h1M221 212h1M221 225h1M221 238h1M221 251h1M221 264h1M221 277h1M221 290h1M221 303h1M221 316h1M221 329h1M221 336h1M221 338h1M221 340h1M221 342h1M221 344h1M221 346h1M221 348h1M221 355h1M221 368h1M221 381h1M221 394h1M221 407h1M221 420h1M221 433h1M221 446h1M221 459h1M221 472h1M221 485h1M221 498h1M221 511h1M221 524h1M221 537h1M221 550h1M221 563h1M221 576h1M221 589h1M221 602h1M221 615h1M221 628h1M221 641h1M221 654h1M221 662h1M221 664h1M221 666h1M223 342h1M225 342h1M227 342h1M229 342h1M231 342h1M233 342h1M235 342h1M237 342h1M239 342h1M241 17h1M241 19h1M241 82h1M241 147h1M241 212h1M241 277h1M241 339h1M241 341h1M241 342h1M241 343h1M241 345h1M241 407h1M241 472h1M241 537h1M241 602h1M241 665h1M241 667h1M243 342h1M245 342h1M247 342h1M249 342h1M251 342h1M253 342h1M255 342h1M257 342h1M259 342h1M261 17h1M261 19h1M261 82h1M261 147h1M261 212h1M261 277h1M261 339h1M261 341h1M261 342h1M261 343h1M261 345h1M261 407h1M261 472h1M261 537h1M261 602h1M261 665h1M261 667h1M263 342h1M265 342h1M267 342h1M269 342h1M271 342h1M273 342h1M275 342h1M277 342h1M279 342h1M281 17h1M281 19h1M281 82h1M281 147h1M281 212h1M281 277h1M281 339h1M281 341h1M281 342h1M281 343h1M281 345h1M281 407h1M281 472h1M281 537h1M281 602h1M281 665h1M281 667h1M283 342h1M285 342h1M287 342h1M289 342h1M291 342h1M293 342h1M295 342h1M297 342h1M299 342h1M301 17h1M301 19h1M301 82h1M301 147h1M301 212h1M301 277h1M301 339h1M301 341h1M301 342h1M301 343h1M301 345h1M301 407h1M301 472h1M301 537h1M301 602h1M301 665h1M301 667h1M303 342h1M305 342h1M307 342h1M309 342h1M311 342h1M313 342h1M315 342h1M317 342h1M319 342h1M321 18h1M321 20h1M321 22h1M321 30h1M321 43h1M321 56h1M321 69h1M321 82h1M321 95h1M321 108h1M321 121h1M321 134h1M321 147h1M321 160h1M321 173h1M321 186h1M321 199h1M321 212h1M321 225h1M321 238h1M321 251h1M321 264h1M321 277h1M321 290h1M321 303h1M321 316h1M321 329h1M321 336h1M321 338h1M321 340h1M321 342h1M321 344h1M321 346h1M321 348h1M321 355h1M321 368h1M321 381h1M321 394h1M321 407h1M321 420h1M321 433h1M321 446h1M321 459h1M321 472h1M321 485h1M321 498h1M321 511h1M321 524h1M321 537h1M321 550h1M321 563h1M321 576h1M321 589h1M321 602h1M321 615h1M321 628h1M321 641h1M321 654h1M321 662h1M321 664h1M321 666h1M323 342h1M325 342h1M327 342h1M329 342h1M331 342h1M333 342h1M335 342h1M337 342h1M339 342h1M341 17h1M341 19h1M341 82h1M341 147h1M341 212h1M341 277h1M341 339h1M341 341h1M341 342h1M341 343h1M341 345h1M341 407h1M341 472h1M341 537h1M341 602h1M341 665h1M341 667h1M343 342h1M345 342h1M347 342h1M349 342h1M351 342h1M353 342h1M355 342h1M357 342h1M359 342h1M361 17h1M361 19h1M361 82h1M361 147h1M361 212h1M361 277h1M361 339h1M361 341h1M361 342h1M361 343h1M361 345h1M361 407h1M361 472h1M361 537h1M361 602h1M361 665h1M361 667h1M363 342h1M365 342h1M367 342h1M369 342h1M371 342h1M373 342h1M375 342h1M377 342h1M379 342h1M381 17h1M381 19h1M381 82h1M381 147h1M381 212h1M381 277h1M381 339h1M381 341h1M381 342h1M381 343h1M381 345h1M381 407h1M381 472h1M381 537h1M381 602h1M381 665h1M381 667h1M383 342h1M385 342h1M387 342h1M389 342h1M391 342h1M393 342h1M395 342h1M397 342h1M399 342h1M401 17h1M401 19h1M401 82h1M401 147h1M401 212h1M401 277h1M401 339h1M401 341h1M401 342h1M401 343h1M401 345h1M401 407h1M401 472h1M401 537h1M401 602h1M401 665h1M401 667h1M403 342h1M405 342h1M407 342h1M409 342h1M411 342h1M413 342h1M415 342h1M417 342h1M419 342h1M421 18h1M421 20h1M421 22h1M421 30h1M421 43h1M421 56h1M421 69h1M421 82h1M421 95h1M421 108h1M421 121h1M421 134h1M421 147h1M421 160h1M421 173h1M421 186h1M421 199h1M421 212h1M421 225h1M421 238h1M421 251h1M421 264h1M421 277h1M421 290h1M421 303h1M421 316h1M421 329h1M421 336h1M421 338h1M421 340h1M421 342h1M421 344h1M421 346h1M421 348h1M421 355h1M421 368h1M421 381h1M421 394h1M421 407h1M421 420h1M421 433h1M421 446h1M421 459h1M421 472h1M421 485h1M421 498h1M421 511h1M421 524h1M421 537h1M421 550h1M421 563h1M421 576h1M421 589h1M421 602h1M421 615h1M421 628h1M421 641h1M421 654h1M421 662h1M421 664h1M421 666h1M423 342h1M425 342h1M427 342h1M429 342h1M431 342h1M433 342h1M435 342h1M437 342h1M439 342h1M441 17h1M441 19h1M441 82h1M441 147h1M441 212h1M441 277h1M441 339h1M441 341h1M441 342h1M441 343h1M441 345h1M441 407h1M441 472h1M441 537h1M441 602h1M441 665h1M441 667h1M443 342h1M445 342h1M447 342h1M449 342h1M451 342h1M453 342h1M455 342h1M457 342h1M459 342h1M461 17h1M461 19h1M461 82h1M461 147h1M461 212h1M461 277h1M461 339h1M461 341h1M461 342h1M461 343h1M461 345h1M461 407h1M461 472h1M461 537h1M461 602h1M461 665h1M461 667h1M463 342h1M465 342h1M467 342h1M469 342h1M471 342h1M473 342h1M475 342h1M477 342h1M479 342h1M481 17h1M481 19h1M481 82h1M481 147h1M481 212h1M481 277h1M481 339h1M481 341h1M481 342h1M481 343h1M481 345h1M481 407h1M481 472h1M481 537h1M481 602h1M481 665h1M481 667h1M483 342h1M485 342h1M487 342h1M489 342h1M491 342h1M493 342h1M495 342h1M497 342h1M499 342h1M501 17h1M501 19h1M501 82h1M501 147h1M501 212h1M501 277h1M501 339h1M501 341h1M501 342h1M501 343h1M501 345h1M501 407h1M501 472h1M501 537h1M501 602h1M501 665h1M501 667h1M503 342h1M505 342h1M507 342h1M509 342h1M511 342h1M513 342h1M515 82h1M515 147h1M515 212h1M515 277h1M515 342h1M515 407h1M515 472h1M515 537h1M515 602h1M517 82h1M517 147h1M517 212h1M517 277h1M517 342h1M517 407h1M517 472h1M517 537h1M517 602h1M518 30h1M518 43h1M518 56h1M518 69h1M518 95h1M518 108h1M518 121h1M518 134h1M518 160h1M518 173h1M518 186h1M518 199h1M518 225h1M518 238h1M518 251h1M518 264h1M518 290h1M518 303h1M518 316h1M518 329h1M518 342h1M518 355h1M518 368h1M518 381h1M518 394h1M518 420h1M518 433h1M518 446h1M518 459h1M518 485h1M518 498h1M518 511h1M518 524h1M518 550h1M518 563h1M518 576h1M518 589h1M518 615h1M518 628h1M518 641h1M518 654h1M519 82h1M519 147h1M519 212h1M519 277h1M519 342h1M519 407h1M519 472h1M519 537h1M519 602h1M520 30h1M520 43h1M520 56h1M520 69h1M520 95h1M520 108h1M520 121h1M520 134h1M520 160h1M520 173h1M520 186h1M520 199h1M520 225h1M520 238h1M520 251h1M520 264h1M520 290h1M520 303h1M520 316h1M520 329h1M520 342h1M520 355h1M520 368h1M520 381h1M520 394h1M520 420h1M520 433h1M520 446h1M520 459h1M520 485h1M520 498h1M520 511h1M520 524h1M520 550h1M520 563h1M520 576h1M520 589h1M520 615h1M520 628h1M520 641h1M520 654h1M521 24h1M521 26h1M521 28h1M521 30h1M521 32h1M521 34h1M521 36h1M521 38h1M521 40h1M521 42h1M521 43h1M521 44h1M521 46h1M521 48h1M521 50h1M521 52h1M521 54h1M521 56h1M521 58h1M521 60h1M521 62h1M521 64h1M521 66h1M521 68h1M521 69h1M521 70h1M521 72h1M521 74h1M521 76h1M521 78h1M521 80h1M521 82h1M521 84h1M521 86h1M521 88h1M521 90h1M521 92h1M521 94h1M521 95h1M521 96h1M521 98h1M521 100h1M521 102h1M521 104h1M521 106h1M521 108h1M521 110h1M521 112h1M521 114h1M521 116h1M521 118h1M521 120h1M521 121h1M521 122h1M521 124h1M521 126h1M521 128h1M521 130h1M521 132h1M521 134h1M521 136h1M521 138h1M521 140h1M521 142h1M521 144h1M521 146h1M521 147h1M521 148h1M521 150h1M521 152h1M521 154h1M521 156h1M521 158h1M521 160h1M521 162h1M521 164h1M521 166h1M521 168h1M521 170h1M521 172h1M521 173h1M521 174h1M521 176h1M521 178h1M521 180h1M521 182h1M521 184h1M521 186h1M521 188h1M521 190h1M521 192h1M521 194h1M521 196h1M521 198h1M521 199h1M521 200h1M521 202h1M521 204h1M521 206h1M521 208h1M521 210h1M521 212h1M521 214h1M521 216h1M521 218h1M521 220h1M521 222h1M521 224h1M521 225h1M521 226h1M521 228h1M521 230h1M521 232h1M521 234h1M521 236h1M521 238h1M521 240h1M521 242h1M521 244h1M521 246h1M521 248h1M521 250h1M521 251h1M521 252h1M521 254h1M521 256h1M521 258h1M521 260h1M521 262h1M521 264h1M521 266h1M521 268h1M521 270h1M521 272h1M521 274h1M521 276h1M521 277h1M521 278h1M521 280h1M521 282h1M521 284h1M521 286h1M521 288h1M521 290h1M521 292h1M521 294h1M521 296h1M521 298h1M521 300h1M521 302h1M521 303h1M521 304h1M521 306h1M521 308h1M521 310h1M521 312h1M521 314h1M521 316h1M521 318h1M521 320h1M521 322h1M521 324h1M521 326h1M521 328h1M521 329h1M521 330h1M521 332h1M521 334h1M521 336h1M521 338h1M521 339h1M521 340h1M521 341h1M521 342h1M521 343h1M521 344h1M521 345h1M521 346h1M521 348h1M521 350h1M521 352h1M521 354h1M521 355h1M521 356h1M521 358h1M521 360h1M521 362h1M521 364h1M521 366h1M521 368h1M521 370h1M521 372h1M521 374h1M521 376h1M521 378h1M521 380h1M521 381h1M521 382h1M521 384h1M521 386h1M521 388h1M521 390h1M521 392h1M521 394h1M521 396h1M521 398h1M521 400h1M521 402h1M521 404h1M521 406h1M521 407h1M521 408h1M521 410h1M521 412h1M521 414h1M521 416h1M521 418h1M521 420h1M521 422h1M521 424h1M521 426h1M521 428h1M521 430h1M521 432h1M521 433h1M521 434h1M521 436h1M521 438h1M521 440h1M521 442h1M521 444h1M521 446h1M521 448h1M521 450h1M521 452h1M521 454h1M521 456h1M521 458h1M521 459h1M521 460h1M521 462h1M521 464h1M521 466h1M521 468h1M521 470h1M521 472h1M521 474h1M521 476h1M521 478h1M521 480h1M521 482h1M521 484h1M521 485h1M521 486h1M521 488h1M521 490h1M521 492h1M521 494h1M521 496h1M521 498h1M521 500h1M521 502h1M521 504h1M521 506h1M521 508h1M521 510h1M521 511h1M521 512h1M521 514h1M521 516h1M521 518h1M521 520h1M521 522h1M521 524h1M521 526h1M521 528h1M521 530h1M521 532h1M521 534h1M521 536h1M521 537h1M521 538h1M521 540h1M521 542h1M521 544h1M521 546h1M521 548h1M521 550h1M521 552h1M521 554h1M521 556h1M521 558h1M521 560h1M521 562h1M521 563h1M521 564h1M521 566h1M521 568h1M521 570h1M521 572h1M521 574h1M521 576h1M521 578h1M521 580h1M521 582h1M521 584h1M521 586h1M521 588h1M521 589h1M521 590h1M521 592h1M521 594h1M521 596h1M521 598h1M521 600h1M521 602h1M521 604h1M521 606h1M521 608h1M521 610h1M521 612h1M521 614h1M521 615h1M521 616h1M521 618h1M521 620h1M521 622h1M521 624h1M521 626h1M521 628h1M521 630h1M521 632h1M521 634h1M521 636h1M521 638h1M521 640h1M521 641h1M521 642h1M521 644h1M521 646h1M521 648h1M521 650h1M521 652h1M521 654h1M521 656h1M521 658h1M521 660h1M521 662h1M521 664h1M521 666h1M522 30h1M522 43h1M522 56h1M522 69h1M522 95h1M522 108h1M522 121h1M522 134h1M522 160h1M522 173h1M522 186h1M522 199h1M522 225h1M522 238h1M522 251h1M522 264h1M522 290h1M522 303h1M522 316h1M522 329h1M522 342h1M522 355h1M522 368h1M522 381h1M522 394h1M522 420h1M522 433h1M522 446h1M522 459h1M522 485h1M522 498h1M522 511h1M522 524h1M522 550h1M522 563h1M522 576h1M522 589h1M522 615h1M522 628h1M522 641h1M522 654h1M523 82h1M523 147h1M523 212h1M523 277h1M523 342h1M523 407h1M523 472h1M523 537h1M523 602h1M524 30h1M524 43h1M524 56h1M524 69h1M524 95h1M524 108h1M524 121h1M524 134h1M524 160h1M524 173h1M524 186h1M524 199h1M524 225h1M524 238h1M524 251h1M524 264h1M524 290h1M524 303h1M524 316h1M524 329h1M524 342h1M524 355h1M524 368h1M524 381h1M524 394h1M524 420h1M524 433h1M524 446h1M524 459h1M524 485h1M524 498h1M524 511h1M524 524h1M524 550h1M524 563h1M524 576h1M524 589h1M524 615h1M524 628h1M524 641h1M524 654h1M525 82h1M525 147h1M525 212h1M525 277h1M525 342h1M525 407h1M525 472h1M525 537h1M525 602h1M527 82h1M527 147h1M527 212h1M527 277h1M527 342h1M527 407h1M527 472h1M527 537h1M527 602h1M529 342h1M531 342h1M533 342h1M535 342h1M537 342h1M539 342h1M541 17h1M541 19h1M541 82h1M541 147h1M541 212h1M541 277h1M541 339h1M541 341h1M541 342h1M541 343h1M541 345h1M541 407h1M541 472h1M541 537h1M541 602h1M541 665h1M541 667h1M543 342h1M545 342h1M547 342h1M549 342h1M551 342h1M553 342h1M555 342h1M557 342h1M559 342h1M561 17h1M561 19h1M561 82h1M561 147h1M561 212h1M561 277h1M561 339h1M561 341h1M561 342h1M561 343h1M561 345h1M561 407h1M561 472h1M561 537h1M561 602h1M561 665h1M561 667h1M563 342h1M565 342h1M567 342h1M569 342h1M571 342h1M573 342h1M575 342h1M577 342h1M579 342h1M581 17h1M581 19h1M581 82h1M581 147h1M581 212h1M581 277h1M581 339h1M581 341h1M581 342h1M581 343h1M581 345h1M581 407h1M581 472h1M581 537h1M581 602h1M581 665h1M581 667h1M583 342h1M585 342h1M587 342h1M589 342h1M591 342h1M593 342h1M595 342h1M597 342h1M599 342h1M601 17h1M601 19h1M601 82h1M601 147h1M601 212h1M601 277h1M601 339h1M601 341h1M601 342h1M601 343h1M601 345h1M601 407h1M601 472h1M601 537h1M601 602h1M601 665h1M601 667h1M603 342h1M605 342h1M607 342h1M609 342h1M611 342h1M613 342h1M615 342h1M617 342h1M619 342h1M621 18h1M621 20h1M621 22h1M621 30h1M621 43h1M621 56h1M621 69h1M621 82h1M621 95h1M621 108h1M621 121h1M621 134h1M621 147h1M621 160h1M621 173h1M621 186h1M621 199h1M621 212h1M621 225h1M621 238h1M621 251h1M621 264h1M621 277h1M621 290h1M621 303h1M621 316h1M621 329h1M621 336h1M621 338h1M621 340h1M621 342h1M621 344h1M621 346h1M621 348h1M621 355h1M621 368h1M621 381h1M621 394h1M621 407h1M621 420h1M621 433h1M621 446h1M621 459h1M621 472h1M621 485h1M621 498h1M621 511h1M621 524h1M621 537h1M621 550h1M621 563h1M621 576h1M621 589h1M621 602h1M621 615h1M621 628h1M621 641h1M621 654h1M621 662h1M621 664h1M621 666h1M623 342h1M625 342h1M627 342h1M629 342h1M631 342h1M633 342h1M635 342h1M637 342h1M639 342h1M641 17h1M641 19h1M641 82h1M641 147h1M641 212h1M641 277h1M641 339h1M641 341h1M641 342h1M641 343h1M641 345h1M641 407h1M641 472h1M641 537h1M641 602h1M641 665h1M641 667h1M643 342h1M645 342h1M647 342h1M649 342h1M651 342h1M653 342h1M655 342h1M657 342h1M659 342h1M661 17h1M661 19h1M661 82h1M661 147h1M661 212h1M661 277h1M661 339h1M661 341h1M661 342h1M661 343h1M661 345h1M661 407h1M661 472h1M661 537h1M661 602h1M661 665h1M661 667h1M663 342h1M665 342h1M667 342h1M669 342h1M671 342h1M673 342h1M675 342h1M677 342h1M679 342h1M681 17h1M681 19h1M681 82h1M681 147h1M681 212h1M681 277h1M681 339h1M681 341h1M681 342h1M681 343h1M681 345h1M681 407h1M681 472h1M681 537h1M681 602h1M681 665h1M681 667h1M683 342h1M685 342h1M687 342h1M689 342h1M691 342h1M693 342h1M695 342h1M697 342h1M699 342h1M701 17h1M701 19h1M701 82h1M701 147h1M701 212h1M701 277h1M701 339h1M701 341h1M701 342h1M701 343h1M701 345h1M701 407h1M701 472h1M701 537h1M701 602h1M701 665h1M701 667h1M703 342h1M705 342h1M707 342h1M709 342h1M711 342h1M713 342h1M715 342h1M717 342h1M719 342h1M721 18h1M721 20h1M721 22h1M721 30h1M721 43h1M721 56h1M721 69h1M721 82h1M721 95h1M721 108h1M721 121h1M721 134h1M721 147h1M721 160h1M721 173h1M721 186h1M721 199h1M721 212h1M721 225h1M721 238h1M721 251h1M721 264h1M721 277h1M721 290h1M721 303h1M721 316h1M721 329h1M721 336h1M721 338h1M721 340h1M721 342h1M721 344h1M721 346h1M721 348h1M721 355h1M721 368h1M721 381h1M721 394h1M721 407h1M721 420h1M721 433h1M721 446h1M721 459h1M721 472h1M721 485h1M721 498h1M721 511h1M721 524h1M721 537h1M721 550h1M721 563h1M721 576h1M721 589h1M721 602h1M721 615h1M721 628h1M721 641h1M721 654h1M721 662h1M721 664h1M721 666h1M723 342h1M725 342h1M727 342h1M729 342h1M731 342h1M733 342h1M735 342h1M737 342h1M739 342h1M741 17h1M741 19h1M741 82h1M741 147h1M741 212h1M741 277h1M741 339h1M741 341h1M741 342h1M741 343h1M741 345h1M741 407h1M741 472h1M741 537h1M741 602h1M741 665h1M741 667h1M743 342h1M745 342h1M747 342h1M749 342h1M751 342h1M753 342h1M755 342h1M757 342h1M759 342h1M761 17h1M761 19h1M761 82h1M761 147h1M761 212h1M761 277h1M761 339h1M761 341h1M761 342h1M761 343h1M761 345h1M761 407h1M761 472h1M761 537h1M761 602h1M761 665h1M761 667h1M763 342h1M765 342h1M767 342h1M769 342h1M771 342h1M773 342h1M775 342h1M777 342h1M779 342h1M781 17h1M781 19h1M781 82h1M781 147h1M781 212h1M781 277h1M781 339h1M781 341h1M781 342h1M781 343h1M781 345h1M781 407h1M781 472h1M781 537h1M781 602h1M781 665h1M781 667h1M783 342h1M785 342h1M787 342h1M789 342h1M791 342h1M793 342h1M795 342h1M797 342h1M799 342h1M801 17h1M801 19h1M801 82h1M801 147h1M801 212h1M801 277h1M801 339h1M801 341h1M801 342h1M801 343h1M801 345h1M801 407h1M801 472h1M801 537h1M801 602h1M801 665h1M801 667h1M803 342h1M805 342h1M807 342h1M809 342h1M811 342h1M813 342h1M815 342h1M817 342h1M819 342h1M821 18h1M821 20h1M821 22h1M821 30h1M821 43h1M821 56h1M821 69h1M821 82h1M821 95h1M821 108h1M821 121h1M821 134h1M821 147h1M821 160h1M821 173h1M821 186h1M821 199h1M821 212h1M821 225h1M821 238h1M821 251h1M821 264h1M821 277h1M821 290h1M821 303h1M821 316h1M821 329h1M821 336h1M821 338h1M821 340h1M821 342h1M821 344h1M821 346h1M821 348h1M821 355h1M821 368h1M821 381h1M821 394h1M821 407h1M821 420h1M821 433h1M821 446h1M821 459h1M821 472h1M821 485h1M821 498h1M821 511h1M821 524h1M821 537h1M821 550h1M821 563h1M821 576h1M821 589h1M821 602h1M821 615h1M821 628h1M821 641h1M821 654h1M821 662h1M821 664h1M821 666h1M823 342h1M825 342h1M827 342h1M829 342h1M831 342h1M833 342h1M835 342h1M837 342h1M839 342h1M841 17h1M841 19h1M841 82h1M841 147h1M841 212h1M841 277h1M841 339h1M841 341h1M841 342h1M841 343h1M841 345h1M841 407h1M841 472h1M841 537h1M841 602h1M841 665h1M841 667h1M843 342h1M845 342h1M847 342h1M849 342h1M851 342h1M853 342h1M855 342h1M857 342h1M859 342h1M861 17h1M861 19h1M861 82h1M861 147h1M861 212h1M861 277h1M861 339h1M861 341h1M861 342h1M861 343h1M861 345h1M861 407h1M861 472h1M861 537h1M861 602h1M861 665h1M861 667h1M863 342h1M865 342h1M867 342h1M869 342h1M871 342h1M873 342h1M875 342h1M877 342h1M879 342h1M881 17h1M881 19h1M881 82h1M881 147h1M881 212h1M881 277h1M881 339h1M881 341h1M881 342h1M881 343h1M881 345h1M881 407h1M881 472h1M881 537h1M881 602h1M881 665h1M881 667h1M883 342h1M885 342h1M887 342h1M889 342h1M891 342h1M893 342h1M895 342h1M897 342h1M899 342h1M901 17h1M901 19h1M901 82h1M901 147h1M901 212h1M901 277h1M901 339h1M901 341h1M901 342h1M901 343h1M901 345h1M901 407h1M901 472h1M901 537h1M901 602h1M901 665h1M901 667h1M903 342h1M905 342h1M907 342h1M909 342h1M911 342h1M913 342h1M915 342h1M917 342h1M919 342h1M921 18h1M921 20h1M921 22h1M921 30h1M921 43h1M921 56h1M921 69h1M921 82h1M921 95h1M921 108h1M921 121h1M921 134h1M921 147h1M921 160h1M921 173h1M921 186h1M921 199h1M921 212h1M921 225h1M921 238h1M921 251h1M921 264h1M921 277h1M921 290h1M921 303h1M921 316h1M921 329h1M921 336h1M921 338h1M921 340h1M921 342h1M921 344h1M921 346h1M921 348h1M921 355h1M921 368h1M921 381h1M921 394h1M921 407h1M921 420h1M921 433h1M921 446h1M921 459h1M921 472h1M921 485h1M921 498h1M921 511h1M921 524h1M921 537h1M921 550h1M921 563h1M921 576h1M921 589h1M921 602h1M921 615h1M921 628h1M921 641h1M921 654h1M921 662h1M921 664h1M921 666h1M923 342h1M925 342h1M927 342h1M929 342h1M931 342h1M933 342h1M935 342h1M937 342h1M939 342h1M941 17h1M941 19h1M941 82h1M941 147h1M941 212h1M941 277h1M941 339h1M941 341h1M941 342h1M941 343h1M941 345h1M941 407h1M941 472h1M941 537h1M941 602h1M941 665h1M941 667h1M943 342h1M945 342h1M947 342h1M949 342h1M951 342h1M953 342h1M955 342h1M957 342h1M959 342h1M961 17h1M961 19h1M961 82h1M961 147h1M961 212h1M961 277h1M961 339h1M961 341h1M961 342h1M961 343h1M961 345h1M961 407h1M961 472h1M961 537h1M961 602h1M961 665h1M961 667h1M963 342h1M965 342h1M967 342h1M969 342h1M971 342h1M973 342h1M975 342h1M977 342h1M979 342h1M981 17h1M981 19h1M981 82h1M981 147h1M981 212h1M981 277h1M981 339h1M981 341h1M981 342h1M981 343h1M981 345h1M981 407h1M981 472h1M981 537h1M981 602h1M981 665h1M981 667h1M983 342h1M985 342h1M987 342h1M989 342h1M991 342h1M993 342h1M995 342h1M997 342h1M999 342h1M1001 17h1M1001 19h1M1001 82h1M1001 147h1M1001 212h1M1001 277h1M1001 339h1M1001 341h1M1001 342h1M1001 343h1M1001 345h1M1001 407h1M1001 472h1M1001 537h1M1001 602h1M1001 665h1M1001 667h1M1003 342h1M1005 342h1M1007 342h1M1009 342h1M1011 342h1M1013 342h1M1015 82h1M1015 147h1M1015 212h1M1015 277h1M1015 342h1M1015 407h1M1015 472h1M1015 537h1M1015 602h1M1017 82h1M1017 147h1M1017 212h1M1017 277h1M1017 342h1M1017 407h1M1017 472h1M1017 537h1M1017 602h1M1018 30h1M1018 43h1M1018 56h1M1018 69h1M1018 95h1M1018 108h1M1018 121h1M1018 134h1M1018 160h1M1018 173h1M1018 186h1M1018 199h1M1018 225h1M1018 238h1M1018 251h1M1018 264h1M1018 290h1M1018 303h1M1018 316h1M1018 329h1M1018 355h1M1018 368h1M1018 381h1M1018 394h1M1018 420h1M1018 433h1M1018 446h1M1018 459h1M1018 485h1M1018 498h1M1018 511h1M1018 524h1M1018 550h1M1018 563h1M1018 576h1M1018 589h1M1018 615h1M1018 628h1M1018 641h1M1018 654h1M1019 82h1M1019 147h1M1019 212h1M1019 277h1M1019 342h1M1019 407h1M1019 472h1M1019 537h1M1019 602h1M1020 30h1M1020 43h1M1020 56h1M1020 69h1M1020 95h1M1020 108h1M1020 121h1M1020 134h1M1020 160h1M1020 173h1M1020 186h1M1020 199h1M1020 225h1M1020 238h1M1020 251h1M1020 264h1M1020 290h1M1020 303h1M1020 316h1M1020 329h1M1020 355h1M1020 368h1M1020 381h1M1020 394h1M1020 420h1M1020 433h1M1020 446h1M1020 459h1M1020 485h1M1020 498h1M1020 511h1M1020 524h1M1020 550h1M1020 563h1M1020 576h1M1020 589h1M1020 615h1M1020 628h1M1020 641h1M1020 654h1"/>
</g>
<g fill="#4f8ecf">
<rect x="20" y="16" width="1" height="653"/>
<rect x="1021" y="16" width="1" height="653"/>
<rect x="20" y="16" width="1002" height="1"/>
<rect x="20" y="668" width="1002" height="1"/>
<rect x="121" y="0" width="800" height="1"/>
<rect x="121" y="15" width="800" height="1"/>
<rect x="121" y="0" width="1" height="16"/>
<rect x="920" y="0" width="1" height="16"/>
</g>
<rect x="282" y="7" width="479" height="1" fill="#aa00aa"/>
<rect x="519" y="1" width="5" height="14" fill="#fff"/><rect x="521" y="3" width="1" height="10" fill="#000"/><rect x="521" y="3" width="1" height="2" fill="#ff9900"/>
<rect x="518" y="1" width="1" height="1" fill="#ff9900"/><rect x="524" y="1" width="1" height="1" fill="#ff9900"/>
<polygon points="516,17 527,17 521.5,23" fill="#ff9900" shape-rendering="auto"/>
<polygon shape-rendering="auto" fill="#ff9900" points="21,30.5 27,24 37,24 38,25 38,36 37,37 27,37"/>
<rect x="27" y="25" width="10" height="2" fill="#000"/><rect x="31" y="25" width="2" height="11" fill="#000"/>
<polygon shape-rendering="auto" fill="#ff9900" points="122,10.5 127,5 133,5 134,6 134,15 133,16 127,16"/>
<g shape-rendering="auto"><rect x="127.7" y="6" width="5.6" height="1.4" fill="#000"/><rect x="129.3" y="6" width="2" height="8.8" fill="#000"/></g>
<polygon shape-rendering="auto" fill="url(#mg)" points="0,72 1,71 13,71 20,79 13,88 1,88 0,87"/>
<polygon shape-rendering="auto" fill="#000" stroke="#00ffff" stroke-width="1.8" points="0.5,178.8 13,178.8 19.3,186.5 13,194.2 0.5,194.2"/>
<polygon shape-rendering="auto" fill="#000" stroke="#3ce63c" stroke-width="1.8" points="0.5,658.8 13,658.8 19.3,666.5 13,674.2 0.5,674.2"/>
<path shape-rendering="auto" d="M920.5 685.5h4l3.5-9h4" fill="none" stroke="#fff" stroke-width="1.6"/>
</svg>
<div class="t" style="left:0px;top:-1.8px;font-family:'Liberation Serif','DejaVu Serif',serif;font-size:21px;line-height:20px;height:20px;letter-spacing:-.9px;color:#f4f4ff;-webkit-text-stroke:.35px #f4f4ff">Tek</div>
<div class="t" style="left:35px;top:1.2px;font-size:15px;letter-spacing:1.4px">Run</div>
<div class="t" style="left:926px;top:1px;font-size:15px;letter-spacing:.9px">Trig?</div>

<div class="t" style="left:3px;top:71.5px;font-size:15px;color:#000;letter-spacing:0;line-height:17px;-webkit-text-stroke:.6px #000">3</div>
<div class="t" style="left:3px;top:179px;font-size:15px;color:#00ffff;letter-spacing:0;line-height:17px;-webkit-text-stroke:.4px #00ffff">2</div>
<div class="t" style="left:3px;top:659px;font-size:15px;color:#00d400;letter-spacing:0;line-height:17px;-webkit-text-stroke:.5px #00d400">4</div>

<div class="box" style="left:20px;top:670px;width:555px;height:21px"></div>
<div class="pill" style="left:165px;top:673px;background:#10dce8">2</div>
<div class="t" style="left:208px;top:673px;color:#10dce8">200mV</div>
<div class="t" style="left:269px;top:672px;color:#10dce8">Ω<span class="bw" style="left:14px;top:2px">B</span><span class="bw" style="left:17.5px;top:6px;font-size:8.5px">W</span></div>
<div class="pill" style="left:304px;top:673px;background:#a800a8">3</div>
<div class="t" style="left:347px;top:673px;color:#b800b8">200mV</div>
<div class="t" style="left:408px;top:672px;color:#b800b8">Ω<span class="bw" style="left:14px;top:2px">B</span><span class="bw" style="left:17.5px;top:6px;font-size:8.5px">W</span></div>
<div class="pill" style="left:443px;top:673px;background:#009c00">4</div>
<div class="t" style="left:474px;top:673px;color:#00a800">↓100mV</div>
<div class="t" style="left:547px;top:672px;color:#00a800">Ω<span class="bw" style="left:14px;top:2px">B</span><span class="bw" style="left:17.5px;top:6px;font-size:8.5px">W</span></div>

<div class="box" style="left:582px;top:670px;width:148px;height:38px"></div>
<div class="t" style="left:588px;top:673px;letter-spacing:1.35px">2.00µs</div>
<div class="t" style="left:587px;top:691px;width:12px;height:13px;background:#ff9900;border-radius:2px;color:#000;font-size:13.5px;line-height:13.5px;text-align:center;letter-spacing:0;font-weight:bold;-webkit-text-stroke:0">T</div>
<svg width="24" height="12" style="position:absolute;left:598px;top:692px"><path d="M2 5.5H8" fill="none" stroke="#ff9900" stroke-width="1.3"/><polygon points="6.8,2 11,5.5 6.8,9" fill="#ff9900"/><polygon points="12,2 23,2 17.5,8.2" fill="#ff9900"/></svg>
<div class="t" style="left:623px;top:690px;color:#ff9900;letter-spacing:1.05px">1.806000ms</div>

<div class="box" style="left:737px;top:670px;width:107px;height:38px"></div>
<div class="t" style="left:743px;top:673px;letter-spacing:1.3px">2.50GS/s</div>
<div class="t" style="left:742.5px;top:690px;letter-spacing:1.55px">5M points</div>

<div class="box" style="left:851px;top:670px;width:171px;height:39px"></div>
<div class="pill" style="left:882px;top:673px;background:#ffff00">1</div>
<div class="t" style="left:966px;top:673px">2.10 V</div>

<div class="box" style="left:909px;top:729px;width:113px;height:37px"></div>
<div class="t" style="left:926px;top:732.5px;letter-spacing:.6px">1 Dec</div><div class="t" style="left:979px;top:732.5px">2023</div>
<div class="t" style="left:915.5px;top:749px;letter-spacing:1.1px">16:14:01</div>

<div style="position:absolute;left:0;top:714px;width:17px;height:60px;background:#a800a8;border-radius:0 6px 0 0"></div>
<div class="t" style="left:4px;top:735.5px;color:#000;font-size:15px;letter-spacing:0">3</div>

<div class="btn" style="left:20px"><div class="lbl" style="top:4px;left:2px;letter-spacing:1.1px">Coupling</div></div>
<div class="sel" style="left:33px;width:30px">DC</div>
<div style="position:absolute;left:90px;top:742px;width:30px;height:26px;background:#333;color:#666;font-size:15px;line-height:26px;text-align:center;letter-spacing:.5px">AC</div>

<div class="btn" style="left:138px"><div class="lbl" style="top:4px;left:3px;letter-spacing:1.05px">Termination</div></div>
<div class="opt" style="left:149px;top:746px">1MΩ</div>
<div class="sel" style="left:203px;width:41px">50Ω</div>

<div class="btn" style="left:256px"><div class="lbl" style="top:4px;left:1px;letter-spacing:.95px">Invert</div></div>
<div class="opt" style="left:272px;top:746px">On</div>
<div class="sel" style="left:325px;width:33px">Off</div>

<div class="btn" style="left:374px"><div class="lbl" style="top:9px;letter-spacing:.85px">Bandwidth</div></div>
<div style="position:absolute;left:401px;top:742px;width:60px;height:15px;background:#0a70ff;color:#fff;font-size:15px;line-height:18.4px;text-align:center;letter-spacing:.9px">20MHz</div>

<div class="btn" style="left:492px"></div>
<div class="pill" style="left:514px;top:733px;background:#a800a8">3</div>
<div class="opt" style="left:546px;top:732.5px;font-size:15px;letter-spacing:.3px">Label</div>

<div class="btn" style="left:728px"><div class="lbl" style="top:24px;left:2px;font-size:14px;letter-spacing:1.9px">More</div><svg width="26" height="12" style="position:absolute;left:44px;top:12px"><polygon points="1,11 23,11 12,0" fill="#ececec"/><rect x="7.5" y="8.4" width="9.5" height="1.6" fill="#a4a4a4"/></svg></div>
</body></html>
